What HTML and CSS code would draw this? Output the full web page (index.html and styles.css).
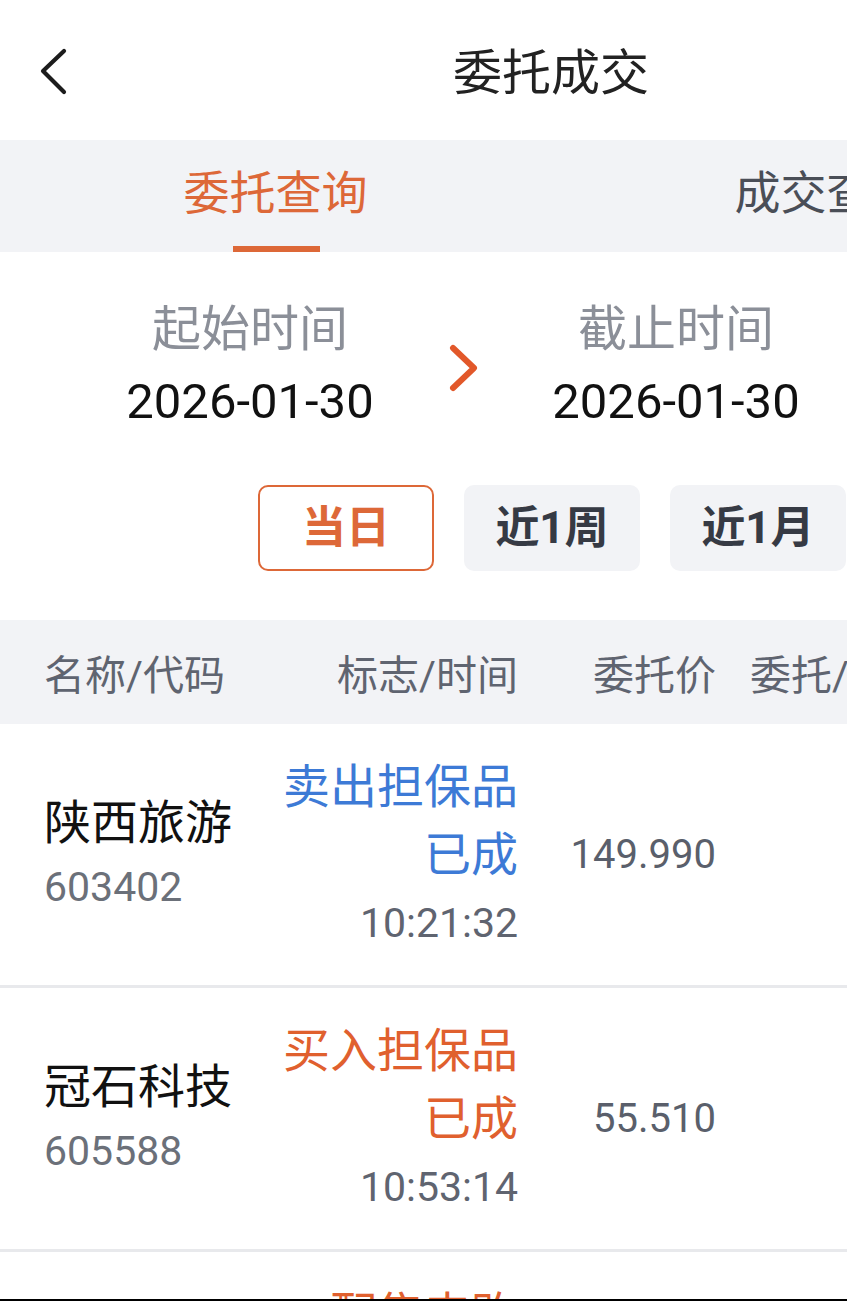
FILE: index.html
```html
<!DOCTYPE html>
<html lang="zh-CN">
<head>
<meta charset="utf-8">
<title>委托成交</title>
<link rel="stylesheet" href="styles.css">
</head>
<body>
<div class="page">

    <div class="topbar">
        <div class="back">
            <svg width="34" height="52" viewBox="0 0 34 52">
                <polyline points="24,5 3,25 24,46" fill="none" stroke="#1c1c1c" stroke-width="4.2" stroke-linecap="round" stroke-linejoin="round"/>
            </svg>
        </div>
        <div class="title">委托成交</div>
        <div></div>
    </div>

    <div class="tabs">
        <div class="tab active">委托查询</div>
        <div class="tab">成交查询</div>
    </div>

    <div class="range">
        <div class="range-col">
            <div class="range-label">起始时间</div>
            <div class="range-date">2026-01-30</div>
        </div>
        <div class="range-arrow">
            <svg width="34" height="48" viewBox="0 0 34 48">
                <polyline points="7,4 28,24 7,44" fill="none" stroke="#e2582a" stroke-width="6" stroke-linecap="round" stroke-linejoin="round"/>
            </svg>
        </div>
        <div class="range-col">
            <div class="range-label">截止时间</div>
            <div class="range-date">2026-01-30</div>
        </div>
    </div>

    <div class="quick">
        <button class="quick-btn selected">当日</button>
        <button class="quick-btn">近1周</button>
        <button class="quick-btn">近1月</button>
        <button class="quick-btn">近3月</button>
    </div>

    <div class="thead">
        <div class="c-name">名称/代码</div>
        <div class="c-flag">标志/时间</div>
        <div class="c-price">委托价</div>
        <div class="c-qty">委托/成交</div>
    </div>

    <div class="row">
        <div class="c-name">
            <div class="stock">陕西旅游</div>
            <div class="code">603402</div>
        </div>
        <div class="c-flag">
            <div class="flag sell">卖出担保品</div>
            <div class="flag sell">已成</div>
            <div class="time">10:21:32</div>
        </div>
        <div class="c-price">149.990</div>
        <div class="c-qty"></div>
    </div>

    <div class="row">
        <div class="c-name">
            <div class="stock">冠石科技</div>
            <div class="code">605588</div>
        </div>
        <div class="c-flag">
            <div class="flag buy">买入担保品</div>
            <div class="flag buy">已成</div>
            <div class="time">10:53:14</div>
        </div>
        <div class="c-price">55.510</div>
        <div class="c-qty"></div>
    </div>

    <div class="row">
        <div class="c-name">
            <div class="stock">&nbsp;</div>
            <div class="code">&nbsp;</div>
        </div>
        <div class="c-flag">
            <div class="flag buy">配售申购</div>
            <div class="flag buy">已成</div>
            <div class="time">&nbsp;</div>
        </div>
        <div class="c-price"></div>
        <div class="c-qty"></div>
    </div>

</div>
<div class="screen-edge"></div>
</body>
</html>
```

FILE: styles.css
```css
body {
    margin: 0;
    background-color: white;
    font-family: Roboto, "Noto Sans CJK SC", sans-serif;
    color: #1f1f1f;
    overflow: hidden;
}

.page {
    width: 1102px;
}

.topbar {
    height: 140px;
    display: grid;
    grid-template-columns: 1fr auto 1fr;
    align-items: center;
}

.back {
    padding-left: 40px;
    padding-top: 4px;
    display: flex;
}

.title {
    font-size: 49px;
    line-height: 60px;
    color: #222;
    padding-top: 8px;
}

.tabs {
    display: flex;
    height: 112px;
    background-color: #f2f3f6;
}

.tab {
    flex: 1;
    text-align: center;
    font-size: 46px;
    line-height: 106px;
    color: #4a4e57;
    position: relative;
}

.tab.active {
    color: #dd6838;
}

.tab.active::after {
    content: "";
    position: absolute;
    left: 50%;
    bottom: 0;
    width: 87px;
    height: 6px;
    margin-left: -43px;
    background-color: #dd6838;
}

.range {
    display: flex;
    align-items: center;
    padding: 48px 0 0 100px;
}

.range-col {
    width: 300px;
    text-align: center;
}

.range-label {
    font-size: 49px;
    line-height: 60px;
    color: #8b8f98;
}

.range-date {
    font-size: 49px;
    line-height: 60px;
    margin-top: 12px;
    color: #111;
}

.range-arrow {
    width: 126px;
    display: flex;
    justify-content: center;
    padding-top: 4px;
}

.quick {
    display: flex;
    gap: 30px;
    margin-top: 53px;
    padding-left: 258px;
}

.quick-btn {
    width: 176px;
    height: 86px;
    border: 2px solid transparent;
    border-radius: 10px;
    background-color: #f2f3f6;
    color: #363a44;
    font-family: Roboto, "Noto Sans CJK SC", sans-serif;
    font-size: 44px;
    font-weight: bold;
    padding: 0 0 8px 0;
}

.quick-btn.selected {
    background-color: white;
    border-color: #dd6838;
    color: #dd6838;
}

.thead {
    display: flex;
    height: 104px;
    margin-top: 49px;
    align-items: center;
    padding-left: 44px;
    background-color: #f2f3f6;
    font-size: 41px;
    color: #5f6470;
}

.c-name {
    width: 230px;
}

.c-flag {
    width: 244px;
    text-align: right;
    white-space: nowrap;
}

.c-price {
    width: 198px;
    text-align: right;
}

.c-qty {
    margin-left: 34px;
}

.row {
    display: flex;
    align-items: center;
    height: 261px;
    padding-left: 44px;
    border-bottom: 3px solid #e8e9ec;
}

.stock {
    font-size: 47px;
    line-height: 64px;
    color: #111;
}

.code {
    font-size: 41px;
    line-height: 64px;
    color: #6b7079;
}

.flag {
    font-size: 47px;
    line-height: 68px;
}

.flag.sell {
    color: #3d7ad6;
}

.flag.buy {
    color: #e0602e;
}

.time {
    font-size: 41px;
    line-height: 68px;
    color: #5f6470;
}

.row .c-price {
    font-size: 40px;
    color: #5a5f6b;
}

.screen-edge {
    position: fixed;
    left: 0;
    right: 0;
    bottom: 0;
    height: 2px;
    background-color: black;
}
```
